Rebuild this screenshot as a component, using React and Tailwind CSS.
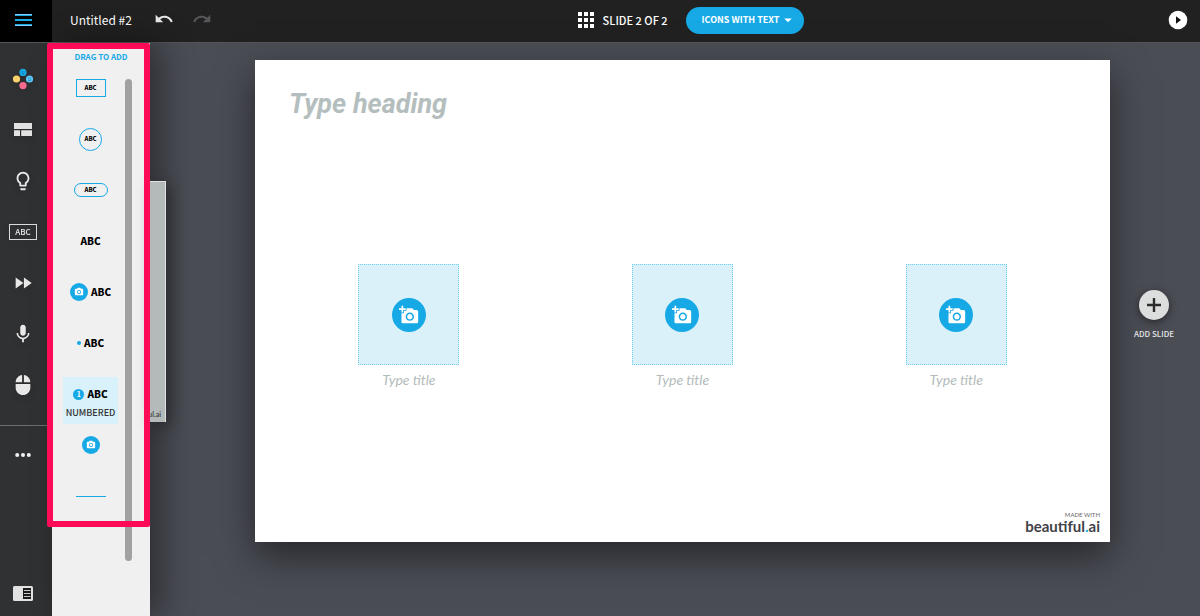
import React from "react";
import {
  MdUndo,
  MdRedo,
  MdLightbulbOutline,
  MdFastForward,
  MdMic,
  MdMouse,
  MdAddAPhoto,
  MdPhotoCamera,
  MdArrowDropDown,
} from "react-icons/md";

function MenuIcon() {
  return (
    <svg viewBox="0 0 17 12" className="h-3 w-[17px]" aria-hidden="true">
      <path d="M0 0h17v2H0zM0 5h17v2H0zM0 10h17v2H0z" fill="#16a9e6" />
      <path d="M0 0h17v1H0zM0 11h17v1H0z" fill="#7fcdf0" />
    </svg>
  );
}

function GridIcon() {
  return (
    <svg viewBox="0 0 16 16" className="size-4" fill="#fff" aria-hidden="true">
      {[0, 6, 12].map((y) => [0, 6, 12].map((x) => <rect key={`${x}-${y}`} x={x} y={y} width="4" height="4" />))}
    </svg>
  );
}

function PlayIcon() {
  return (
    <svg viewBox="0 0 20 20" className="size-5" aria-hidden="true">
      <circle cx="10" cy="10" r="9.3" fill="#fff" />
      <path d="M8 6.2v7.6l5-3.8z" fill="#111" />
    </svg>
  );
}

function ElementsIcon() {
  return (
    <svg viewBox="0 0 22 22" className="size-[22px]" aria-hidden="true">
      <circle cx="11" cy="4.4" r="3.6" fill="#16a9e6" />
      <circle cx="4.5" cy="11" r="3.6" fill="#fbd26c" />
      <circle cx="17.5" cy="11" r="3.6" fill="#5cc6f5" />
      <circle cx="11" cy="17.6" r="3.6" fill="#f56a8d" />
      <path d="M9.8 3.8h.8M11.8 3.8h.8M9.8 5.6q1.2.9 2.4 0" stroke="#0c6fa0" strokeWidth=".8" fill="none" />
      <path d="M16.2 10h.9M18.2 10h.9M16.2 12q1.3 1 2.6 0" stroke="#0c6fa0" strokeWidth=".8" fill="none" />
    </svg>
  );
}

function LayoutIcon() {
  return (
    <svg viewBox="0 0 18 13" className="h-[13px] w-[18px]" fill="#e2e2e2" aria-hidden="true">
      <path d="M0 0h18v6H0zM0 7.2h6V13H0zM7.2 7.2H18V13H7.2z" />
    </svg>
  );
}

function DotsIcon() {
  return (
    <svg viewBox="0 0 16 4" className="h-1 w-4" fill="#f2f2f2" aria-hidden="true">
      <circle cx="2.2" cy="2" r="2" />
      <circle cx="8" cy="2" r="2" />
      <circle cx="13.8" cy="2" r="2" />
    </svg>
  );
}

function NotesIcon() {
  return (
    <svg viewBox="0 0 20 15" className="h-[15px] w-5" aria-hidden="true">
      <rect width="20" height="15" rx="1.5" fill="#e2e2e2" />
      <rect x="10" y="2" width="8" height="11" fill="#1c1c1d" />
      <path d="M11 4.5h6.5M11 7.5h6.5M11 10.5h6.5" stroke="#c9c9c9" strokeWidth="1" />
    </svg>
  );
}

function PlusIcon() {
  return (
    <svg viewBox="0 0 14 14" className="size-[14px]" aria-hidden="true">
      <path d="M7 0v14M0 7h14" stroke="#2b2b2c" strokeWidth="2.4" />
    </svg>
  );
}

const tools = [
  { label: "Elements", icon: <ElementsIcon /> },
  { label: "Layout", icon: <LayoutIcon /> },
  { label: "Ideas", icon: <MdLightbulbOutline className="size-[22px]" /> },
  {
    label: "Text",
    icon: (
      <span className="flex h-4 w-7 items-center justify-center border border-[#dcdcdc] text-[8px] leading-none font-medium">
        ABC
      </span>
    ),
  },
  { label: "Animate", icon: <MdFastForward className="size-[22px]" /> },
  { label: "Voice", icon: <MdMic className="size-[22px]" /> },
  { label: "Interaction", icon: <MdMouse className="size-[22px]" /> },
];

function CameraBadge() {
  return (
    <span className="flex size-[18px] items-center justify-center rounded-full bg-[#16a9e6]">
      <MdPhotoCamera className="size-[10px] text-white" />
    </span>
  );
}

function Abc() {
  return <span className="text-[10px] leading-none font-black">ABC</span>;
}

const shapes = [
  {
    label: "Box",
    art: (
      <span className="flex h-[18px] w-[30px] items-center justify-center border border-[#16a9e6] text-[6px] leading-none font-black">
        ABC
      </span>
    ),
  },
  {
    label: "Circle",
    art: (
      <span className="flex size-[23px] items-center justify-center rounded-full border border-[#16a9e6] text-[6px] leading-none font-black">
        ABC
      </span>
    ),
  },
  {
    label: "Capsule",
    art: (
      <span className="flex h-[14px] w-[34px] items-center justify-center rounded-full border border-[#16a9e6] text-[6px] leading-none font-black">
        ABC
      </span>
    ),
  },
  { label: "Text", art: <Abc /> },
  { label: "Media text", art: <><CameraBadge /><Abc /></> },
  { label: "Bullet", art: <><span className="size-1 rounded-full bg-[#16a9e6]" /><Abc /></> },
  {
    label: "Numbered",
    caption: "NUMBERED",
    art: (
      <>
        <span className="flex size-[11px] items-center justify-center rounded-full bg-[#16a9e6] text-[7px] leading-none font-bold text-white">
          1
        </span>
        <Abc />
      </>
    ),
  },
  { label: "Media", art: <CameraBadge /> },
  { label: "Line", art: <span className="h-px w-[30px] bg-[#16a9e6]" /> },
];

function Header() {
  return (
    <header className="grid h-[43px] shrink-0 grid-cols-[1fr_auto_1fr] items-center border-b border-[#555659] bg-[#212121] text-white">
      <div className="flex h-full items-center">
        <button aria-label="Menu" className="flex h-full w-[52px] items-center justify-center bg-black pr-[5px] pb-[2px]">
          <MenuIcon />
        </button>
        <span className="ml-[18px] pb-[2px] text-xs">Untitled #2</span>
        <button aria-label="Undo" className="ml-[22px] pb-1">
          <MdUndo className="size-5 text-[#e8e8e8]" />
        </button>
        <button aria-label="Redo" className="ml-[18px] pb-1">
          <MdRedo className="size-5 text-[#55565a]" />
        </button>
      </div>
      <div className="ml-[182px] flex items-center pb-[2px]">
        <button className="flex items-center gap-[9px] text-[11px] font-medium">
          <GridIcon />
          SLIDE 2 OF 2
        </button>
        <button className="ml-[18px] flex h-[27px] items-center rounded-full bg-[#16a9e6] pr-[7px] pl-4 text-[9px] font-bold">
          ICONS WITH TEXT
          <MdArrowDropDown className="size-[18px]" />
        </button>
      </div>
      <button aria-label="Play" className="mr-[12px] justify-self-end pb-[2px]">
        <PlayIcon />
      </button>
    </header>
  );
}

function Rail() {
  return (
    <nav aria-label="Tools" className="flex w-[52px] shrink-0 flex-col bg-[#303133] pt-[10px] text-[#e8e8e8]">
      {tools.map((t) => (
        <button key={t.label} aria-label={t.label} className="flex h-[51px] shrink-0 items-center justify-center pr-[6px] drop-shadow-md">
          {t.icon}
        </button>
      ))}
      <div className="mt-[15px] border-t border-[#6b6c6e]" />
      <button aria-label="More" className="flex h-[58px] items-center justify-center pr-[6px]">
        <DotsIcon />
      </button>
      <button aria-label="Slide notes" className="mt-auto flex h-[46px] items-center justify-center pr-[6px]">
        <NotesIcon />
      </button>
    </nav>
  );
}

function ShapePanel() {
  return (
    <aside className="z-10 flex w-[98px] shrink-0 flex-col bg-[#f0f0f0] pt-2 text-black shadow-[12px_0_32px_rgba(0,0,0,0.4)]">
      <h2 className="text-center text-[8px] leading-3 font-bold text-[#16a9e6]">DRAG TO ADD</h2>
      <div className="flex justify-end pr-[18px]">
        <div className="mr-[7px] flex flex-col pt-[6px]">
          {shapes.map((s) => (
            <button key={s.label} aria-label={s.label} className="flex h-[51px] w-[55px] flex-col items-center pt-[2px]">
              <span className={s.caption ? "flex h-[47px] w-full flex-col items-center bg-[#d9f1fa]" : "flex h-[47px] w-full flex-col items-center"}>
                <span className="flex h-[34px] shrink-0 items-center justify-center gap-[3px] text-center">{s.art}</span>
                {s.caption && <span className="-mt-1 text-[9px] leading-3 font-medium text-[#333]">{s.caption}</span>}
              </span>
            </button>
          ))}
        </div>
        <div className="mt-4 h-[482px] w-[7px] rounded-full bg-[#a0a1a1]" />
      </div>
    </aside>
  );
}

function IconCard() {
  return (
    <div className="flex flex-col items-center">
      <button
        aria-label="Add picture"
        className="flex size-[101px] items-center justify-center border border-dotted border-[#6ccbee] bg-[#daf1fa]"
      >
        <span className="flex size-[34px] items-center justify-center rounded-full bg-[#16a9e6]">
          <MdAddAPhoto className="size-5 text-white" />
        </span>
      </button>
      <p className="mt-[3px] font-['Lato',sans-serif] text-sm leading-6 text-[#b3bbbb] italic">Type title</p>
    </div>
  );
}

function Slide() {
  return (
    <section className="flex aspect-[855/482] min-w-0 flex-1 flex-col bg-white shadow-[0_14px_36px_rgba(0,0,0,0.5)]">
      <h1 className="px-[34px] pt-[28px] font-['Roboto',sans-serif] text-[27px] leading-8 font-bold text-[#b5bebe] italic">
        Type heading
      </h1>
      <div className="grid flex-1 grid-cols-3 px-[17px] pt-36">
        <IconCard />
        <IconCard />
        <IconCard />
      </div>
      <footer className="flex flex-col items-end pr-[10px] pb-2 text-[#3f4247]">
        <span className="font-['Lato',sans-serif] text-[6px] leading-[7px] text-[#666]">MADE WITH</span>
        <span className="font-['Lato',sans-serif] text-[15px] leading-4 font-bold">
          beautiful<span className="text-[#16a9e6]">.</span>ai
        </span>
      </footer>
    </section>
  );
}

export default function App() {
  return (
    <div className="flex h-screen flex-col overflow-hidden bg-[#4b4d55] font-['Noto_Sans_CJK_SC',sans-serif]">
      <Header />
      <div className="relative flex min-h-0 flex-1">
        <Rail />
        <ShapePanel />
        <main className="flex min-w-0 flex-1 items-center self-start pt-[17px]">
          <div className="z-10 flex h-[241px] w-4 shrink-0 flex-col items-end justify-end border-t border-r border-[#dfe3e3] bg-[#b4baba] pb-1 shadow-[4px_4px_16px_rgba(0,0,0,0.4)]">
            <span className="pr-1 font-['Lato',sans-serif] text-[7px] leading-2 font-bold text-[#45494c]">ul.ai</span>
          </div>
          <div className="w-[89px] shrink-0" />
          <Slide />
          <div className="flex w-[90px] shrink-0 flex-col items-center pt-[26px] pr-[2px]">
            <button className="flex flex-col items-center gap-[9px] text-[8px] leading-[10px] font-medium text-[#e6e6e6]">
              <span className="flex size-[30px] items-center justify-center rounded-full bg-[#dcdddd] shadow-[0_2px_8px_rgba(0,0,0,0.5)]">
                <PlusIcon />
              </span>
              ADD SLIDE
            </button>
          </div>
        </main>
        <div className="pointer-events-none absolute top-0 left-[47px] z-20 h-[484px] w-[103px] rounded-xs border-[6px] border-[#ff0a56]" />
      </div>
    </div>
  );
}
